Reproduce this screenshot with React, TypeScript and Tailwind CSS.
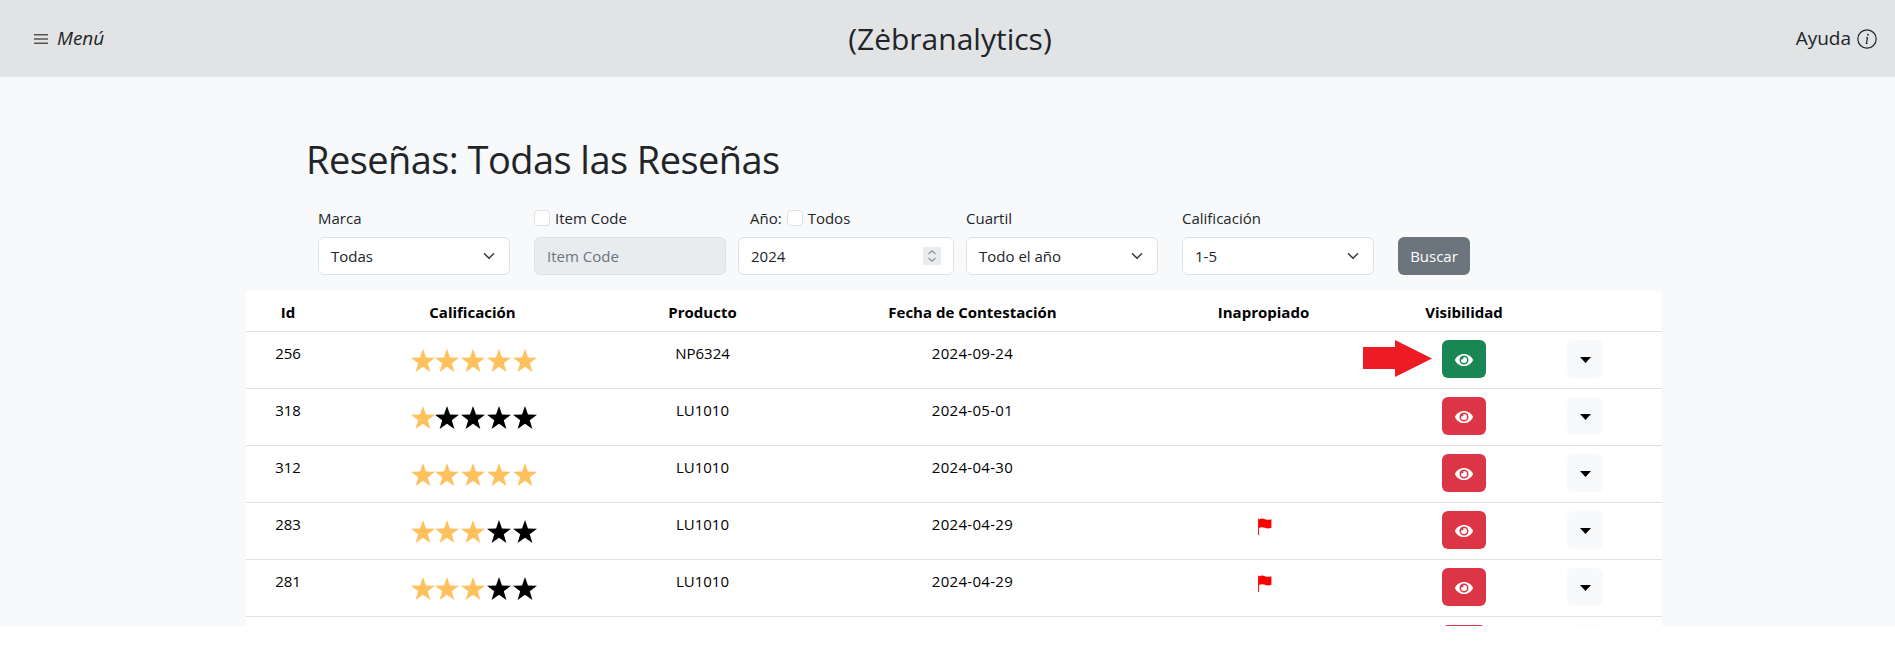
import React from 'react';
import { FaEye } from 'react-icons/fa';

interface Row {
  id: number | string;
  rating: number;
  product: string;
  date: string;
  flagged: boolean;
  visible: boolean;
}

const rows: Row[] = [
  { id: 256, rating: 5, product: 'NP6324', date: '2024-09-24', flagged: false, visible: true },
  { id: 318, rating: 1, product: 'LU1010', date: '2024-05-01', flagged: false, visible: false },
  { id: 312, rating: 5, product: 'LU1010', date: '2024-04-30', flagged: false, visible: false },
  { id: 283, rating: 3, product: 'LU1010', date: '2024-04-29', flagged: true, visible: false },
  { id: 281, rating: 3, product: 'LU1010', date: '2024-04-29', flagged: true, visible: false },
  // only the top edge of this row's button is on screen
  { id: '', rating: 0, product: '', date: '', flagged: false, visible: false }
];

const Star = ({ on }: { on: boolean }) => (
  <svg viewBox="0 0 24 23" className={`h-[23px] w-[24px] ${on ? 'fill-[#ffc05e]' : 'fill-black'}`}>
    <polygon points="12,0 15,8.6 24,8.8 16.8,14.2 19.4,23 12,17.8 4.6,23 7.2,14.2 0,8.8 9,8.6" />
  </svg>
);

const Chevron = () => (
  <svg viewBox="0 0 16 16" className="h-3 w-3 fill-none stroke-[#343a40]" strokeWidth="2" strokeLinecap="round" strokeLinejoin="round">
    <path d="m2 5 6 6 6-6" />
  </svg>
);

const FlagIcon = () => (
  <svg viewBox="0 0 14 17" className="h-[17px] w-[14px] fill-[#ff0000]">
    <path d="M0 0.8h0.9V17H0z" />
    <path d="M0.9 1.5C3 0.2 5 0.4 7 1.2c2 0.8 4 0.9 6.4 0v8.6c-2.4 1-4.4 0.9-6.4 0-2-0.8-4-1-6.1 0.2z" />
  </svg>
);

const FieldSelect = ({ label, value, className = '' }: { label: string; value: string; className?: string }) => (
  <div className={`w-[192px] ${className}`}>
    <div className="mb-[7px] h-[24px] leading-6">{label}</div>
    <div className="flex h-[38px] items-center justify-between rounded-md border border-[#dee2e6] bg-white pl-3 pr-[14px]">
      <span>{value}</span>
      <Chevron />
    </div>
  </div>
);

const CheckBox = () => <span className="inline-block h-4 w-4 rounded-[4px] border border-[#dee2e6] bg-white" />;

const App: React.FC = () => {
  return (
    <div className="h-[626px] overflow-hidden bg-[#f8f9fa] font-['Open_Sans',sans-serif] text-[15px] text-[#212529]">
      <header className="flex h-[77px] items-center justify-between bg-[#e2e3e5] pl-[33px] pr-[18px]">
        <div className="flex items-center gap-[8px] text-[19px] italic">
          <svg viewBox="0 0 16 16" className="h-[18px] w-[16px] fill-[#555]">
            <path d="M1 3h14v1.4H1zM1 7.3h14v1.4H1zM1 11.6h14V13H1z" />
          </svg>
          <span>Menú</span>
        </div>
        <div className="text-[30px] leading-none text-[#212529]">(Zėbranalytics)</div>
        <div className="flex items-center gap-[6px] text-[19px]">
          <span>Ayuda</span>
          <svg viewBox="0 0 20 20" className="h-5 w-5 fill-none stroke-[#212529]" strokeWidth="1.2">
            <circle cx="10" cy="10" r="9.2" />
            <path d="M10.6 8.4 9.4 14.4M9.2 8.6h1.4M8.8 14.5h1.8" />
            <circle cx="10.9" cy="5.7" r="0.9" className="fill-[#212529] stroke-none" />
          </svg>
        </div>
      </header>

      <main className="pl-[246px] pr-[233px] pt-[57px]">
        <h1 className="ml-[60px] h-[50px] text-[38px] leading-[50px] tracking-[-0.56px]">Reseñas: Todas las Reseñas</h1>

        <div className="ml-[72px] mt-[22px] flex items-start">
          <FieldSelect label="Marca" value="Todas" />
          <div className="ml-[24px] w-[192px]">
            <div className="mb-[7px] flex h-[24px] items-center gap-[5px]">
              <CheckBox />
              <span>Item Code</span>
            </div>
            <div className="flex h-[38px] items-center rounded-md border border-[#dee2e6] bg-[#e9ecef] pl-3 text-[#6c757d]">Item Code</div>
          </div>
          <div className="ml-[12px] w-[216px]">
            <div className="mb-[7px] flex h-[24px] items-center gap-[5px] pl-[12px]">
              <span>Año:</span>
              <CheckBox />
              <span>Todos</span>
            </div>
            <div className="flex h-[38px] items-center justify-between rounded-md border border-[#dee2e6] bg-white pl-3 pr-[12px]">
              <span>2024</span>
              <svg viewBox="0 0 18 18" className="h-[18px] w-[18px]">
                <rect width="18" height="18" fill="#e9ecef" />
                <path d="m5.5 7 3.5-3.2L12.500 7M5.500 11l3.500 3.200 3.500-3.200" fill="none" stroke="#8f959b" strokeWidth="1.300" />
              </svg>
            </div>
          </div>
          <FieldSelect label="Cuartil" value="Todo el año" className="ml-[12px]" />
          <FieldSelect label="Calificación" value="1-5" className="ml-[24px]" />
          <button className="ml-[24px] mt-[31px] h-[38px] w-[72px] rounded-md bg-[#6c757d] text-white">Buscar</button>
        </div>

        <table className="mt-[16px] w-[1416px] table-fixed border-collapse bg-white text-center text-black">
          <colgroup>
            <col className="w-[84px]" />
            <col className="w-[285px]" />
            <col className="w-[175px]" />
            <col className="w-[365px]" />
            <col className="w-[217px]" />
            <col className="w-[184px]" />
            <col className="w-[106px]" />
          </colgroup>
          <thead>
            <tr className="h-[40px] border-b border-[#dee2e6] font-bold">
              <th className="pt-[2px]">Id</th>
              <th className="pt-[2px]">Calificación</th>
              <th className="pt-[2px]">Producto</th>
              <th className="pt-[2px]">Fecha de Contestación</th>
              <th className="pt-[2px]">Inapropiado</th>
              <th className="pt-[2px]">Visibilidad</th>
              <th />
            </tr>
          </thead>
          <tbody>
            {rows.map((row, i) => (
              <tr key={i} className="h-[57px] border-b border-[#dee2e6] align-top">
                <td className="pt-[10px]">{row.id}</td>
                <td className="pt-[17px]">
                  <div className="ml-[81px] flex">
                    {[1, 2, 3, 4, 5].map(n => (
                      <span key={n} className={n === 1 ? 'w-[24px]' : 'w-[26px]'}>
                        <Star on={n <= row.rating} />
                      </span>
                    ))}
                  </div>
                </td>
                <td className="pt-[10px]">{row.product}</td>
                <td className="pt-[10px] tracking-[0.3px]">{row.date}</td>
                <td className="pt-[15px]">
                  {row.flagged && (
                    <span className="ml-[3px] inline-block">
                      <FlagIcon />
                    </span>
                  )}
                </td>
                <td className="pt-[8px]">
                  <div className="relative ml-[70px] w-[44px]">
                    <div className={`flex h-[38px] w-[44px] items-center justify-center rounded-md pt-[2px] text-white ${row.visible ? 'bg-[#198754]' : 'bg-[#dc3545]'}`}>
                      <FaEye size={18} />
                    </div>
                    {i === 0 && (
                      <svg viewBox="0 0 69 37" className="absolute left-[-79px] top-0 h-[37px] w-[69px] fill-[#ed1c24]">
                        <polygon points="0,7 32,7 32,0 69,18.500 32,37 32,29 0,29" />
                      </svg>
                    )}
                  </div>
                </td>
                <td className="pt-[8px]">
                  <div className="ml-[11px] flex h-[38px] w-[36px] items-center justify-center rounded-md bg-[#f8f9fa]">
                    <svg viewBox="0 0 11 6" className="mt-[2px] h-[6px] w-[11px] fill-black">
                      <polygon points="0,0 11,0 5.500,6" />
                    </svg>
                  </div>
                </td>
              </tr>
            ))}
          </tbody>
        </table>
      </main>
    </div>
  );
};

export default App;
